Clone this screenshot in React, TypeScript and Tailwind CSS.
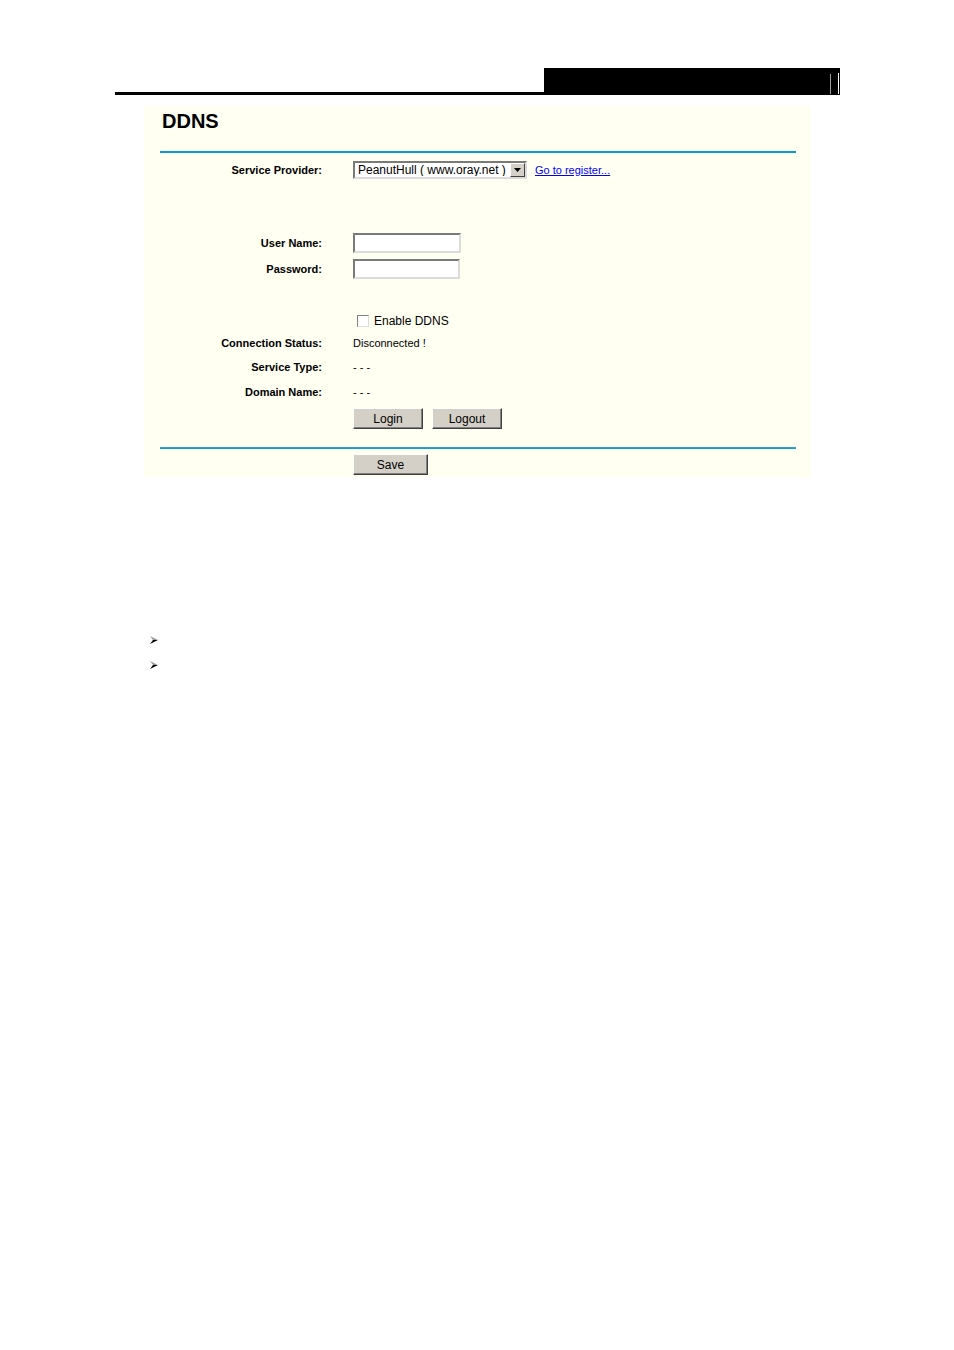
const font = { fontFamily: '"Liberation Sans", Arial, sans-serif' }

function Label({ children }: { children: React.ReactNode }) {
  return <div className="text-right text-[11px] font-bold text-black">{children}</div>
}

function Button({ label, width }: { label: string; width: string }) {
  return (
    <button
      type="button"
      className={`${width} h-[21px] border border-t-white border-l-white border-r-[#404040] border-b-[#404040] bg-[#d4d0c8] text-[12px] leading-none text-black shadow-[inset_-1px_-1px_0_#808080]`}
    >
      {label}
    </button>
  )
}

function TextBox({ width }: { width: string }) {
  return (
    <div className={`${width} h-[20px] border-2 border-t-[#7a7a7a] border-l-[#7a7a7a] border-r-[#dcdcdc] border-b-[#dcdcdc] bg-white`} />
  )
}

function Bullet() {
  return (
    <svg width="10" height="10" viewBox="0 0 10 10">
      <path d="M1 1L9 5H4z" fill="#9a9a9a" />
      <path d="M1 9L9 5H4z" fill="#000" />
    </svg>
  )
}

export default function App() {
  return (
    <div className="min-h-[1350px] w-[954px] bg-white pt-[68px]" style={font}>
      {/* page header rule */}
      <div className="ml-[115px] flex w-[725px] items-end">
        <div className="h-[3px] flex-1 bg-black" />
        <div className="flex h-[27px] w-[296px] items-end justify-end bg-black pb-[1px]">
          <div className="mr-[7px] h-[20px] w-px bg-[#9a9a9a]" />
          <div className="mr-[1px] h-[21px] w-px bg-white" />
        </div>
      </div>

      {/* DDNS panel */}
      <div className="ml-[144px] mt-[11px] h-[371px] w-[667px] bg-[#fffff2] pb-[3px]">
        <h1 className="pl-[18px] pt-[3px] text-[20px] font-bold leading-[24px] text-black">DDNS</h1>
        <div className="ml-[16px] mt-[18px] h-[2px] w-[636px] bg-[#0a9acd]" />

        <div className="grid grid-cols-[178px_1fr] items-center gap-x-[31px]">
          <div className="col-span-2 h-[8px]" />
          <Label>Service Provider:</Label>
          <div className="flex items-center">
            <div className="flex h-[18px] w-[174px] items-center border-2 border-t-[#7a7a7a] border-l-[#7a7a7a] border-r-[#dcdcdc] border-b-[#dcdcdc] bg-white">
              <span className="flex-1 truncate pl-[3px] text-[12px] leading-none text-black">PeanutHull ( www.oray.net )</span>
              <span className="flex h-[14px] w-[15px] items-center justify-center border border-t-white border-l-white border-r-[#404040] border-b-[#404040] bg-[#d4d0c8]">
                <svg width="7" height="4" viewBox="0 0 7 4">
                  <path d="M0 0h7L3.5 4z" fill="#000" />
                </svg>
              </span>
            </div>
            <a href="#" className="ml-[8px] text-[11px] text-[#0000ff] underline">Go to register...</a>
          </div>

          <div className="col-span-2 h-[54px]" />
          <Label>User Name:</Label>
          <TextBox width="w-[108px]" />
          <div className="col-span-2 h-[6px]" />
          <Label>Password:</Label>
          <TextBox width="w-[107px]" />

          <div className="col-span-2 h-[32px]" />
          <div />
          <div className="flex h-[20px] items-center">
            <span className="ml-[4px] h-[12px] w-[12px] border border-t-[#808080] border-l-[#808080] border-r-[#dcdcdc] border-b-[#dcdcdc] bg-white" />
            <span className="ml-[5px] text-[12px] text-black">Enable DDNS</span>
          </div>

          <div className="flex h-[24px] items-center justify-end"><Label>Connection Status:</Label></div>
          <span className="text-[11px] text-black">Disconnected !</span>
          <div className="flex h-[25px] items-center justify-end"><Label>Service Type:</Label></div>
          <span className="text-[11px] text-black">- - -</span>
          <div className="flex h-[24px] items-center justify-end"><Label>Domain Name:</Label></div>
          <span className="text-[11px] text-black">- - -</span>

          <div className="col-span-2 h-[4px]" />
          <div />
          <div className="flex gap-[9px]">
            <Button label="Login" width="w-[70px]" />
            <Button label="Logout" width="w-[70px]" />
          </div>
        </div>

        <div className="ml-[16px] mt-[18px] w-[636px]">
          <div className="h-px bg-[#3b9fcb]" />
          <div className="h-px bg-[#10a2cc]" />
        </div>
        <div className="ml-[209px] mt-[5px] flex">
          <Button label="Save" width="w-[75px]" />
        </div>
      </div>

      {/* bullets */}
      <div className="ml-[149px] mt-[158px] flex flex-col gap-[15px]">
        <Bullet />
        <Bullet />
      </div>
    </div>
  )
}
